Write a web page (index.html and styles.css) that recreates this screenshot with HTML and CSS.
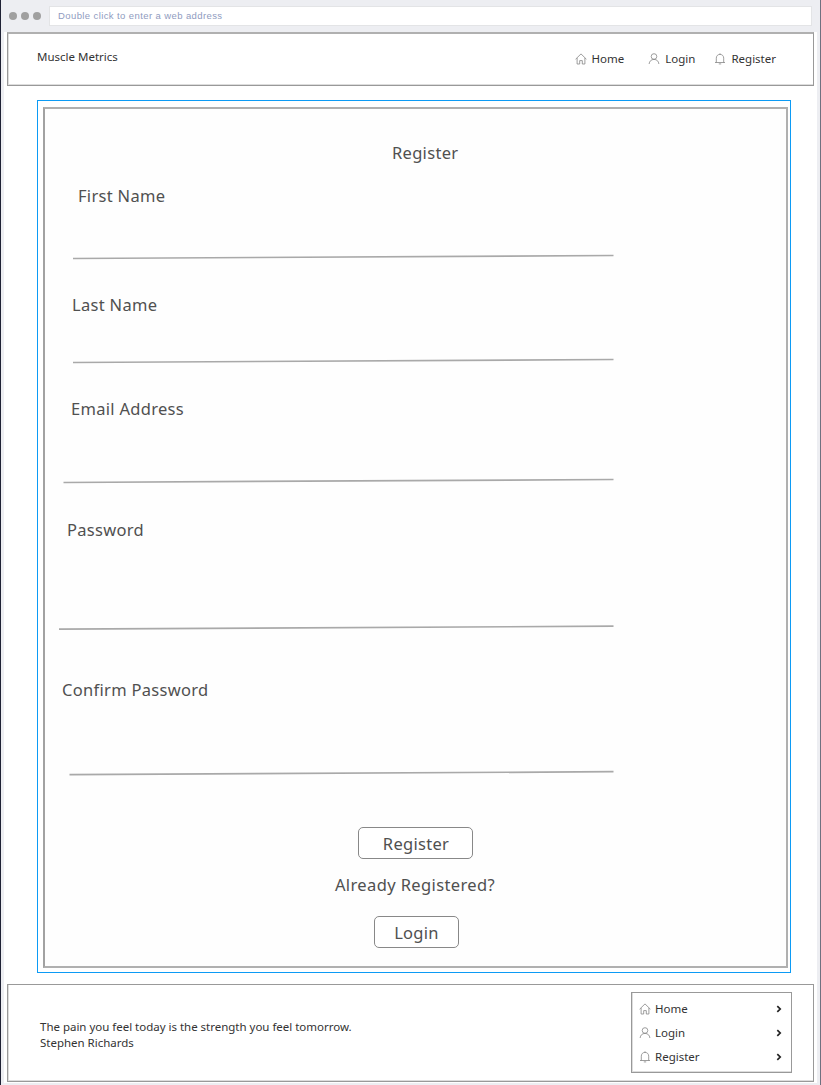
FILE: index.html
```
<!DOCTYPE html>
<html lang="en">
<head>
<meta charset="utf-8">
<title>Muscle Metrics</title>
<link rel="stylesheet" href="styles.css">
</head>
<body>
<svg width="0" height="0" class="defs">
  <symbol id="home" viewBox="0 0 12 12"><path d="M.6 6.200 6 .9l5.400 5.300M2.100 5v6h2.600V7.600h2.600V11h2.600V5"/></symbol>
  <symbol id="user" viewBox="0 0 12 12"><circle cx="6" cy="3.500" r="2.800"/><path d="M1.100 11c.3-2.700 2-4.600 4.900-4.600s4.600 1.900 4.900 4.600"/></symbol>
  <symbol id="bell" viewBox="0 0 12 12"><path d="M6 .3v1.100M1 9.500h10M2.300 9.500V5.200C2.300 2.900 3.800 1.400 6 1.400s3.700 1.500 3.700 3.800v4.300M4.800 10.900h2.400"/></symbol>
</svg>
<div class="browser">
  <div class="toolbar">
    <i class="dot"></i><i class="dot"></i><i class="dot"></i>
    <div class="address">Double click to enter a web address</div>
  </div>
  <div class="page">
    <header class="header">
      <div class="brand">Muscle Metrics</div>
      <nav class="nav">
        <a class="link home"><svg class="icon"><use href="#home"/></svg><span>Home</span></a>
        <a class="link login"><svg class="icon"><use href="#user"/></svg><span>Login</span></a>
        <a class="link"><svg class="icon"><use href="#bell"/></svg><span>Register</span></a>
      </nav>
    </header>
    <main class="selection">
      <form class="card">
        <h1 class="title">Register</h1>
        <div class="field first"><label>First Name</label><svg class="rule" viewBox="0 0 743 6"><path d="M28 4.500 568.500 1.500"/></svg></div>
        <div class="field last"><label>Last Name</label><svg class="rule" viewBox="0 0 743 6"><path d="M28 4.500 568.500 1.500"/></svg></div>
        <div class="field email"><label>Email Address</label><svg class="rule" viewBox="0 0 743 6"><path d="M18.500 4.500 568.500 1.500"/></svg></div>
        <div class="field password"><label>Password</label><svg class="rule" viewBox="0 0 743 6"><path d="M14 4.200 568.500 1.200"/></svg></div>
        <div class="field confirm"><label>Confirm Password</label><svg class="rule" viewBox="0 0 743 6"><path d="M24.500 4.700 568.500 1.700"/></svg></div>
        <div class="actions">
          <button type="button" class="button">Register</button>
          <p class="hint">Already Registered?</p>
          <button type="button" class="button small">Login</button>
        </div>
      </form>
    </main>
    <footer class="footer">
      <p class="quote">The pain you feel today is the strength you feel tomorrow.<br><span class="author">Stephen Richards</span></p>
      <nav class="menu">
        <a class="item"><svg class="icon"><use href="#home"/></svg><span>Home</span><svg class="chevron" viewBox="0 0 6 8"><path d="M1.300 1.200 4.200 4 1.300 6.800"/></svg></a>
        <a class="item"><svg class="icon"><use href="#user"/></svg><span>Login</span><svg class="chevron" viewBox="0 0 6 8"><path d="M1.300 1.200 4.200 4 1.300 6.800"/></svg></a>
        <a class="item"><svg class="icon"><use href="#bell"/></svg><span>Register</span><svg class="chevron" viewBox="0 0 6 8"><path d="M1.300 1.200 4.200 4 1.300 6.800"/></svg></a>
      </nav>
    </footer>
  </div>
</div>
</body>
</html>
```
FILE: styles.css
```
* { box-sizing: border-box; }
body { margin: 0; font: 11.5px/16px "Noto Sans", "Open Sans", sans-serif; color: #333; }
.defs { display: block; }
.browser { width: 821px; height: 1085px; padding: 0 3px; background: #edeef2; border-left: 1px solid #1f2235; border-right: 1px solid #6f7180; overflow: hidden; }
.toolbar { height: 32px; display: flex; align-items: center; padding: 0 5px; gap: 4px; }
.dot { width: 8px; height: 8px; border-radius: 50%; background: #a0a0a0; }
.address { flex: 1; height: 20px; margin: 0 0 0 4px; border: 1px solid #e3e4e6; background: #fff; color: #8f9bc0; font: 9.5px/18px "Liberation Sans", sans-serif; letter-spacing: .4px; padding-left: 8px; }
.page { height: 1051px; background: #fff; padding: 0 3px 2px 3px; }
.header { height: 54px; border: 1px solid #999; border-top: 2px solid #b0b0b0; box-shadow: inset 1px -1px #ddd; display: flex; justify-content: space-between; padding: 15px 37px 0 29px; }
.nav { display: flex; padding-top: 2px; }
.link { display: flex; height: 16px; align-items: center; gap: 5px; }
.link.home { margin-right: 24px; }
.link.login { margin-right: 19px; }
.icon { width: 12px; height: 12px; fill: none; stroke: #858585; stroke-width: .8; }
.selection { width: 754px; height: 873px; margin: 14px 0 0 30px; border: 1px solid #0c9bf5; padding: 6px 2px 4px 5px; }
.card { height: 861px; margin: 0; border: 2px solid #b0b0b0; border-left-color: #a2a2a2; padding-top: 32px; background: #fefefe; font-size: 16.5px; line-height: 24px; letter-spacing: .3px; color: #505050; }
.title { margin: 0 0 19px 347px; font-size: 16.5px; font-weight: 400; line-height: 24px; }
.field { display: flex; flex-direction: column; justify-content: space-between; }
.field label { display: block; }
.rule { display: block; width: 743px; height: 6px; fill: none; stroke: #a9a9a9; stroke-width: 1.7; }
.first { height: 76px; margin-bottom: 33px; }
.last { height: 71px; margin-bottom: 33px; }
.email { height: 87px; margin-bottom: 34px; }
.password { height: 113px; margin-bottom: 47px; }
.confirm { height: 98px; margin-bottom: 51px; }
.first label { padding-left: 33px; }
.last label { padding-left: 27px; }
.email label { padding-left: 26px; }
.password label { padding-left: 22px; }
.confirm label { padding-left: 17px; }
.actions { display: flex; flex-direction: column; align-items: center; width: 740px; }
.button { width: 115px; height: 32px; padding: 1px 0 0 2px; border: 1px solid #888; border-radius: 5px; background: #fff; font: inherit; letter-spacing: inherit; color: inherit; }
.button.small { width: 85px; margin-left: 3px; padding-left: 0; }
.hint { margin: 14px 0 19px; letter-spacing: .38px; }
.footer { height: 98px; margin-top: 11px; border: 1px solid #999; box-shadow: inset 1px -1px #ddd; display: flex; justify-content: space-between; padding: 7px 21px 0 32px; }
.quote { margin: 27px 0 0; white-space: nowrap; letter-spacing: -.015px; }
.menu { width: 161px; height: 81px; border: 1px solid #999; box-shadow: inset 1px -1px #ddd; padding: 4px 9px 0 7px; }
.item { display: flex; height: 24px; align-items: center; gap: 4px; }
.chevron { width: 6px; height: 8px; margin-left: auto; fill: none; stroke: #222; stroke-width: 1.700; }
```
